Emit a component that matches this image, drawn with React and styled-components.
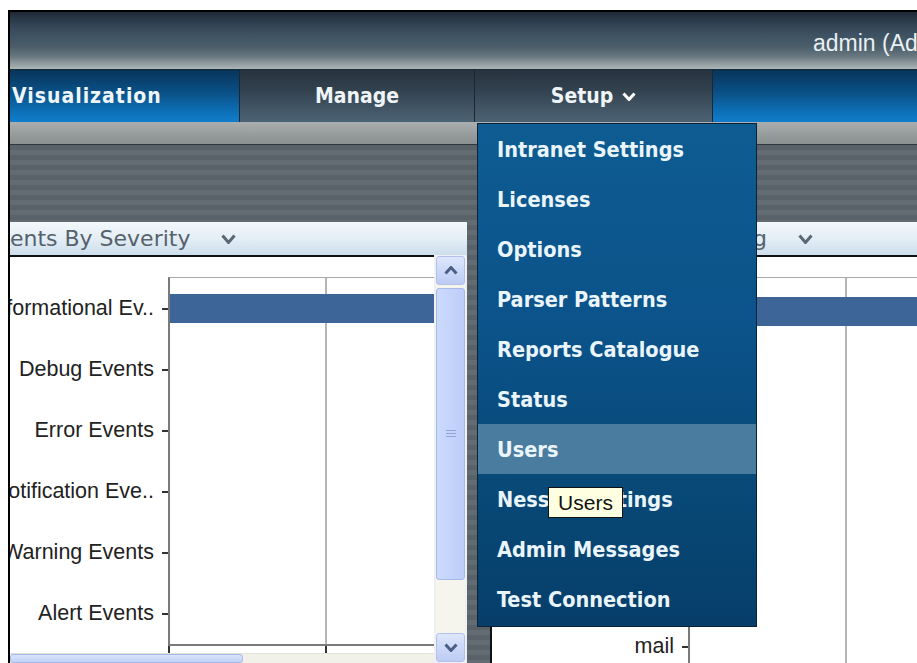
import React from "react";
import styled, { createGlobalStyle } from "styled-components";

const GlobalStyle = createGlobalStyle`
  html, body {
    margin: 0;
    padding: 0;
    background: #ffffff;
    overflow: hidden;
  }
  body {
    font-family: "Liberation Sans", Arial, sans-serif;
  }
`;

const blueTab = "linear-gradient(#08345a 0%, #0a5289 45%, #0d6fb6 80%, #107dcc 100%)";
const slateTab = "linear-gradient(#27333f 0%, #33424f 40%, #425666 75%, #4c6373 100%)";
const menuFont = `"DejaVu Sans Condensed", "DejaVu Sans", sans-serif`;

const Frame = styled.div`
  margin: 10px 0 0 8px;
  width: 907px;
  height: 651px;
  border-top: 2px solid #000;
  border-left: 2px solid #000;
  overflow: hidden;
  display: flex;
  flex-direction: column;
`;

const TopBar = styled.div`
  height: 57px;
  flex-shrink: 0;
  display: grid;
  grid-template-columns: 803px 1fr;
  align-items: center;
  background: linear-gradient(
    #1e2834 0%,
    #324354 22%,
    #3e5263 40%,
    #4b5d69 60%,
    #687780 78%,
    #95a0a3 92%,
    #adb5b6 100%
  );
  border-bottom: 1px solid #172a3a;
`;

const UserInfo = styled.div`
  padding-top: 5px;
  color: #e9f0f4;
  font-size: 23px;
  white-space: nowrap;
`;

const NavBar = styled.nav`
  height: 52px;
  flex-shrink: 0;
  display: flex;
`;

const Tab = styled.div`
  width: ${(p) => p.$width}px;
  flex-shrink: 0;
  box-sizing: border-box;
  position: relative;
  display: flex;
  align-items: center;
  justify-content: ${(p) => (p.$start ? "flex-start" : "center")};
  padding-left: ${(p) => (p.$start ? "2px" : "0")};
  gap: 9px;
  background: ${(p) => (p.$tone === "blue" ? blueTab : slateTab)};
  border-right: 1px solid #1b2733;
  color: #eef4f8;
  font-family: ${menuFont};
  font-stretch: condensed;
  font-weight: bold;
  font-size: 21px;
  letter-spacing: ${(p) => (p.$start ? "1px" : "0")};
  white-space: nowrap;
`;

const NavFill = styled.div`
  flex: 1;
  background: ${blueTab};
`;

const DropMenu = styled.ul`
  position: absolute;
  top: calc(100% + 1px);
  left: 2px;
  z-index: 10;
  width: 280px;
  margin: 0;
  padding: 0 0 2px;
  list-style: none;
  box-sizing: border-box;
  border: 1px solid #0a2338;
  background: linear-gradient(#0e5c92 0%, #0b538a 40%, #084876 75%, #063e69 100%);
  text-align: left;
  letter-spacing: 0;
`;

const MenuItem = styled.li`
  height: 50px;
  display: flex;
  align-items: center;
  padding-left: 19px;
  background: ${(p) => (p.$hover ? "#4a7c9f" : "transparent")};
  color: #eaf5fb;
  font-family: ${menuFont};
  font-stretch: condensed;
  font-weight: bold;
  font-size: 21.5px;
`;

const Tooltip = styled.div`
  position: absolute;
  top: 363px;
  left: 70px;
  width: 75px;
  height: 31px;
  box-sizing: border-box;
  border: 1px solid #111;
  background: #ffffe1;
  display: flex;
  align-items: center;
  justify-content: center;
  color: #111;
  font-family: "Liberation Sans", Arial, sans-serif;
  font-weight: normal;
  font-size: 21px;
`;

const SubBar = styled.div`
  height: 22px;
  flex-shrink: 0;
  background: linear-gradient(#abafaf, #959a9a 60%, #8b9090);
  border-bottom: 1px solid #2f363c;
`;

const Workspace = styled.div`
  flex: 1;
  min-height: 0;
  display: flex;
  gap: 23px;
  padding-top: 77px;
  background: repeating-linear-gradient(
    to bottom,
    #5a6269 0,
    #5a6269 5px,
    #646c73 5px,
    #646c73 10px
  );
`;

const Panel = styled.section`
  width: ${(p) => p.$width}px;
  margin-left: ${(p) => p.$shift || 0}px;
  flex-shrink: 0;
  display: flex;
  flex-direction: column;
  background: #eef1f2;
  overflow: hidden;
`;

const PanelHeader = styled.header`
  height: 33px;
  flex-shrink: 0;
  display: flex;
  align-items: center;
  gap: 31px;
  padding-left: 16px;
  background: linear-gradient(#f3f8fb, #e2edf5 55%, #cddeec);
  color: #56616c;
  font-family: "DejaVu Sans", Verdana, sans-serif;
  font-size: 22px;
  white-space: nowrap;
`;

const PanelBody = styled.div`
  flex: 1;
  min-height: 0;
  display: flex;
`;

const ChartColumn = styled.div`
  flex: 1;
  min-width: 0;
  display: flex;
  flex-direction: column;
  background: #fff;
  border-top: 2px solid #111;
  border-left: ${(p) => (p.$edge ? "2px solid #111" : "none")};
`;

const ChartArea = styled.div`
  display: flex;
  padding-top: 20px;
  height: ${(p) => (p.$height ? `${p.$height}px` : "auto")};
  overflow: hidden;
  flex-shrink: 0;
`;

const LabelColumn = styled.div`
  width: ${(p) => p.$width}px;
  flex-shrink: 0;
  padding-top: 1px;
`;

const AxisLabel = styled.div`
  height: ${(p) => p.$row}px;
  display: flex;
  align-items: center;
  justify-content: flex-end;
  color: #222;
  font-size: 21.5px;
  white-space: nowrap;

  &::after {
    content: "";
    width: 8px;
    height: 2px;
    margin-left: 8px;
    background: #333;
  }
`;

const Plot = styled.div`
  flex: 1;
  align-self: flex-start;
  border-top: 1px solid #a8a8a8;
  border-left: 2px solid #7a7a7a;
  border-bottom: ${(p) => (p.$axis ? "2px solid #7a7a7a" : "none")};
  margin-left: -2px;
  background: linear-gradient(
    to right,
    transparent 155px,
    #b4b4b4 155px,
    #b4b4b4 157px,
    transparent 157px
  );
`;

const PlotRow = styled.div`
  height: ${(p) => p.$row}px;
  display: flex;
  align-items: center;
`;

const Bar = styled.div`
  height: 29px;
  background: #3e6598;
`;

const AxisTicks = styled.div`
  height: 7px;
  flex-shrink: 0;
  display: flex;
  gap: 155px;
  padding-left: ${(p) => p.$offset}px;
`;

const Tick = styled.span`
  width: 2px;
  height: 7px;
  background: #333;
`;

const HScroll = styled.div`
  flex: 1;
  min-height: 8px;
  background: #f1f1e9;
  border-top: 1px solid #e2e2da;
`;

const HThumb = styled.div`
  width: ${(p) => p.$width}px;
  margin-left: ${(p) => p.$offset}px;
  height: 100%;
  box-sizing: border-box;
  border: 1px solid #a5b8e6;
  border-radius: 3px;
  background: linear-gradient(#d9e4fb, #c2d1f6);
`;

const VScroll = styled.div`
  width: 29px;
  flex-shrink: 0;
  margin: 1px 2px 1px 2px;
  display: flex;
  flex-direction: column;
  background: #f5f5ee;
`;

const ScrollButton = styled.div`
  height: 29px;
  flex-shrink: 0;
  box-sizing: border-box;
  border: 1px solid #b3c1ea;
  border-radius: 3px;
  background: linear-gradient(#dde6fc, #bdcbf5);
  display: flex;
  align-items: center;
  justify-content: center;
`;

const ScrollThumb = styled.div`
  height: 292px;
  flex-shrink: 0;
  margin-top: 3px;
  box-sizing: border-box;
  border: 1px solid #a7b8ea;
  border-radius: 3px;
  background: linear-gradient(to right, #ccdafc, #bccdf8);
  display: flex;
  align-items: center;
  justify-content: center;
`;

const ScrollTrack = styled.div`
  flex: 1;
`;

const Chevron = ({ up, color = "#fff", w = 14, h = 9, stroke = 3 }) => (
  <svg width={w} height={h} viewBox={`0 0 ${w} ${h}`}>
    <polyline
      points={
        up
          ? `1.5,${h - 1.5} ${w / 2},1.5 ${w - 1.5},${h - 1.5}`
          : `1.5,1.5 ${w / 2},${h - 1.5} ${w - 1.5},1.5`
      }
      fill="none"
      stroke={color}
      strokeWidth={stroke}
      strokeLinejoin="miter"
    />
  </svg>
);

const Grip = () => (
  <svg width="12" height="10" viewBox="0 0 12 10">
    {[1, 4, 7].map((y) => (
      <line key={y} x1="1" x2="11" y1={y + 0.5} y2={y + 0.5} stroke="#8ea3d6" />
    ))}
  </svg>
);

const setupItems = [
  "Intranet Settings",
  "Licenses",
  "Options",
  "Parser Patterns",
  "Reports Catalogue",
  "Status",
  "Users",
  "Nessus Settings",
  "Admin Messages",
  "Test Connection",
];

const severityData = [
  { label: "Informational Ev..", value: 100 },
  { label: "Debug Events", value: 0 },
  { label: "Error Events", value: 0 },
  { label: "Notification Eve..", value: 0 },
  { label: "Warning Events", value: 0 },
  { label: "Alert Events", value: 0 },
];

const facilityData = [
  { label: "kernel", value: 100 },
  { label: "user", value: 0 },
  { label: "daemon", value: 0 },
  { label: "auth", value: 0 },
  { label: "syslog", value: 0 },
  { label: "mail", value: 0 },
];

const BarChart = ({ data, labelWidth, row, axis }) => {
  const max = Math.max(...data.map((d) => d.value));
  return (
    <>
      <LabelColumn $width={labelWidth}>
        {data.map((d) => (
          <AxisLabel key={d.label} $row={row}>
            {d.label}
          </AxisLabel>
        ))}
      </LabelColumn>
      <Plot $axis={axis}>
        {data.map((d) => (
          <PlotRow key={d.label} $row={row}>
            {d.value > 0 && <Bar style={{ width: `${(d.value / max) * 100}%` }} />}
          </PlotRow>
        ))}
      </Plot>
    </>
  );
};

const App = () => {
  return (
    <>
      <GlobalStyle />
      <Frame>
        <TopBar>
          <div />
          <UserInfo>admin (Administrator)</UserInfo>
        </TopBar>

        <NavBar>
          <Tab $width={230} $tone="blue" $start>
            Visualization
          </Tab>
          <Tab $width={235} $tone="slate">
            Manage
          </Tab>
          <Tab $width={238} $tone="slate">
            Setup
            <Chevron w={14} h={9} stroke={3} />
            <DropMenu>
              {setupItems.map((item) => (
                <MenuItem key={item} $hover={item === "Users"}>
                  {item}
                </MenuItem>
              ))}
              <Tooltip>Users</Tooltip>
            </DropMenu>
          </Tab>
          <NavFill />
        </NavBar>

        <SubBar />

        <Workspace>
          <Panel $width={500} $shift={-43}>
            <PanelHeader>
              <span>Events By Severity</span>
              <Chevron w={15} h={10} stroke={3} color="#5a6876" />
            </PanelHeader>
            <PanelBody>
              <ChartColumn>
                <ChartArea>
                  <BarChart data={severityData} labelWidth={203} row={61} axis />
                </ChartArea>
                <AxisTicks $offset={201}>
                  <Tick />
                  <Tick />
                </AxisTicks>
                <HScroll>
                  <HThumb $width={233} $offset={43} />
                </HScroll>
              </ChartColumn>
              <VScroll>
                <ScrollButton>
                  <Chevron up w={14} h={9} stroke={3} color="#4b5f86" />
                </ScrollButton>
                <ScrollThumb>
                  <Grip />
                </ScrollThumb>
                <ScrollTrack />
                <ScrollButton>
                  <Chevron w={14} h={9} stroke={3} color="#4b5f86" />
                </ScrollButton>
              </VScroll>
            </PanelBody>
          </Panel>

          <Panel $width={600}>
            <PanelHeader>
              <span>Events By Host Logging</span>
              <Chevron w={15} h={10} stroke={3} color="#5a6876" />
            </PanelHeader>
            <PanelBody>
              <ChartColumn $edge>
                <ChartArea $height={402}>
                  <BarChart data={facilityData} labelWidth={198} row={67} />
                </ChartArea>
                <HScroll>
                  <HThumb $width={317} $offset={1} />
                </HScroll>
              </ChartColumn>
            </PanelBody>
          </Panel>
        </Workspace>
      </Frame>
    </>
  );
};

export default App;
